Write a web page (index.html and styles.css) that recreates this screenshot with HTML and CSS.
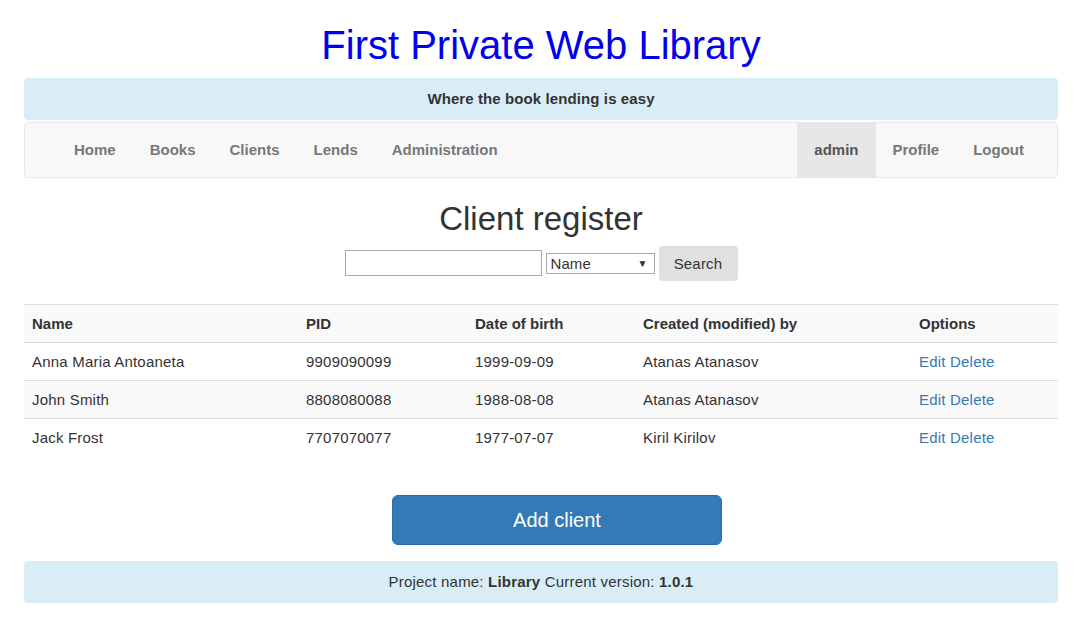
FILE: index.html
```html
<!DOCTYPE html>
<html>
<head>
<meta charset="utf-8">
<link rel="stylesheet" href="styles.css">
</head>
<body>
<div class="page">
  <h1 class="title">First Private Web Library</h1>
  <div class="banner">Where the book lending is easy</div>
  <nav class="navbar">
    <ul class="nav">
      <li><a>Home</a></li>
      <li><a>Books</a></li>
      <li><a>Clients</a></li>
      <li><a>Lends</a></li>
      <li><a>Administration</a></li>
    </ul>
    <ul class="nav nav-right">
      <li class="active"><a>admin</a></li>
      <li><a>Profile</a></li>
      <li><a>Logout</a></li>
    </ul>
  </nav>
  <h2 class="heading">Client register</h2>
  <form class="search">
    <input class="search-input" type="text">
    <div class="select"><span>Name</span><span class="arrow">▼</span></div>
    <button class="btn-search" type="button">Search</button>
  </form>
  <table class="table">
    <tbody>
      <tr class="head"><th class="c1">Name</th><th class="c2">PID</th><th class="c3">Date of birth</th><th class="c4">Created (modified) by</th><th class="c5">Options</th></tr>
      <tr><td>Anna Maria Antoaneta</td><td>9909090099</td><td>1999-09-09</td><td>Atanas Atanasov</td><td><a class="link">Edit</a> <a class="link">Delete</a></td></tr>
      <tr class="odd"><td>John Smith</td><td>8808080088</td><td>1988-08-08</td><td>Atanas Atanasov</td><td><a class="link">Edit</a> <a class="link">Delete</a></td></tr>
      <tr><td>Jack Frost</td><td>7707070077</td><td>1977-07-07</td><td>Kiril Kirilov</td><td><a class="link">Edit</a> <a class="link">Delete</a></td></tr>
    </tbody>
  </table>
  <div class="add-wrap"><button class="btn-add" type="button">Add client</button></div>
  <footer class="footer">Project name: <b>Library</b> Current version: <b>1.0.1</b></footer>
</div>
</body>
</html>
```

FILE: styles.css
```css
html, body {
  margin: 0;
  padding: 0;
  background: #fff;
}
body {
  font-family: "Liberation Sans", Arial, sans-serif;
  font-size: 15px;
  letter-spacing: 0.2px;
  color: #333;
}
.page {
  width: 1034px;
  margin-left: 24px;
}
.title {
  margin: 0;
  padding-top: 22px;
  height: 46px;
  line-height: 46px;
  font-size: 40px;
  font-weight: normal;
  letter-spacing: 0;
  color: #0000ee;
  text-align: center;
}
.banner {
  margin-top: 10px;
  height: 42px;
  line-height: 42px;
  background: #d9edf7;
  border-radius: 4px;
  text-align: center;
  font-weight: bold;
  font-size: 15px;
  letter-spacing: 0.1px;
  color: #333;
}
.navbar {
  margin-top: 2px;
  height: 54px;
  background: #f8f8f8;
  border: 1px solid #e7e7e7;
  border-radius: 4px;
  display: flex;
  justify-content: space-between;
  padding: 0 16px 0 32px;
}
.nav {
  list-style: none;
  margin: 0;
  padding: 0;
  display: flex;
}
.nav li a {
  display: block;
  padding: 0 17px;
  height: 54px;
  line-height: 54px;
  font-size: 15px;
  letter-spacing: 0;
  font-weight: bold;
  color: #777;
}
.nav li.active a {
  background: #e7e7e7;
  color: #555;
}
.heading {
  margin: 22px 0 0;
  height: 38px;
  line-height: 38px;
  font-size: 33px;
  font-weight: normal;
  letter-spacing: 0;
  text-align: center;
  color: #333;
}
.search {
  margin-top: 7px;
  display: flex;
  justify-content: center;
  align-items: center;
  gap: 4px;
  height: 36px;
}
.search-input {
  box-sizing: border-box;
  width: 197px;
  height: 26px;
  margin: 0;
  border: 1px solid #a9a9a9;
  padding: 2px 4px;
}
.select {
  box-sizing: border-box;
  width: 109px;
  height: 21px;
  border: 1px solid #a9a9a9;
  display: flex;
  justify-content: space-between;
  align-items: center;
  padding: 0 6px 0 4px;
  font-size: 15px;
  letter-spacing: 0.1px;
  color: #333;
}
.arrow {
  font-size: 10px;
  color: #333;
}
.btn-search {
  box-sizing: border-box;
  width: 79px;
  height: 35px;
  margin: 0;
  border: none;
  border-radius: 4px;
  background: #e0e0e0;
  font-family: "Liberation Sans", Arial, sans-serif;
  font-size: 15px;
  letter-spacing: 0.2px;
  color: #333;
}
.table {
  margin-top: 23px;
  width: 1034px;
  border-collapse: collapse;
}
.table th, .table td {
  height: 37px;
  padding: 0 8px;
  border-top: 1px solid #ddd;
  text-align: left;
  vertical-align: middle;
  font-size: 15px;
}
.table th {
  font-weight: bold;
  letter-spacing: 0;
}
.table tr.head, .table tr.odd {
  background: #f9f9f9;
}
.c1 { width: 258px; }
.c2 { width: 153px; }
.c3 { width: 152px; }
.c4 { width: 260px; }
.link {
  color: #337ab7;
}
.add-wrap {
  margin-top: 39px;
  padding-left: 368px;
}
.btn-add {
  box-sizing: border-box;
  width: 330px;
  height: 50px;
  margin: 0;
  background: #337ab7;
  border: 1px solid #2e6da4;
  border-radius: 6px;
  color: #fff;
  font-family: "Liberation Sans", Arial, sans-serif;
  font-size: 20px;
  letter-spacing: 0;
  display: block;
}
.footer {
  margin-top: 16px;
  height: 42px;
  line-height: 42px;
  background: #d9edf7;
  border-radius: 4px;
  text-align: center;
  font-size: 15px;
  color: #333;
}
```
